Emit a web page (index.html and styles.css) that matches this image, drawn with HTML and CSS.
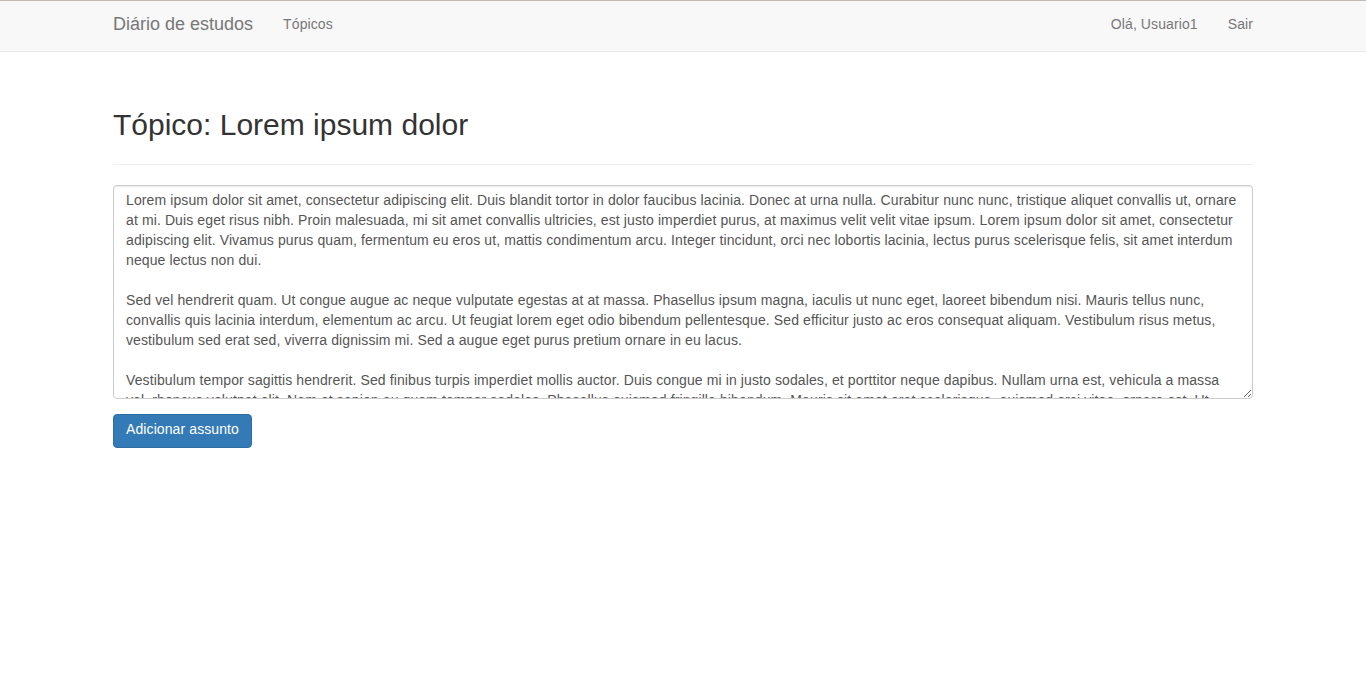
FILE: index.html
```html
<!DOCTYPE html>
<html lang="pt">
<head>
<meta charset="utf-8">
<title>Diário de estudos</title>
<link rel="stylesheet" href="styles.css">
</head>
<body>
<nav class="navbar">
  <div class="container navbar-inner">
    <div class="nav-left">
      <a class="brand" href="#">Diário de estudos</a>
      <a class="nav-link" href="#">Tópicos</a>
    </div>
    <div class="nav-right">
      <a class="nav-link" href="#">Olá, Usuario1</a>
      <a class="nav-link" href="#">Sair</a>
    </div>
  </div>
</nav>
<main class="container">
  <div class="page-header">
    <h2 class="title">Tópico: Lorem ipsum dolor</h2>
  </div>
  <form class="form">
    <textarea class="form-control" rows="10">Lorem ipsum dolor sit amet, consectetur adipiscing elit. Duis blandit tortor in dolor faucibus lacinia. Donec at urna nulla. Curabitur nunc nunc, tristique aliquet convallis ut, ornare at mi. Duis eget risus nibh. Proin malesuada, mi sit amet convallis ultricies, est justo imperdiet purus, at maximus velit velit vitae ipsum. Lorem ipsum dolor sit amet, consectetur adipiscing elit. Vivamus purus quam, fermentum eu eros ut, mattis condimentum arcu. Integer tincidunt, orci nec lobortis lacinia, lectus purus scelerisque felis, sit amet interdum neque lectus non dui.

Sed vel hendrerit quam. Ut congue augue ac neque vulputate egestas at at massa. Phasellus ipsum magna, iaculis ut nunc eget, laoreet bibendum nisi. Mauris tellus nunc, convallis quis lacinia interdum, elementum ac arcu. Ut feugiat lorem eget odio bibendum pellentesque. Sed efficitur justo ac eros consequat aliquam. Vestibulum risus metus, vestibulum sed erat sed, viverra dignissim mi. Sed a augue eget purus pretium ornare in eu lacus.

Vestibulum tempor sagittis hendrerit. Sed finibus turpis imperdiet mollis auctor. Duis congue mi in justo sodales, et porttitor neque dapibus. Nullam urna est, vehicula a massa vel, rhoncus volutpat elit. Nam et sapien eu quam tempor sodales. Phasellus euismod fringilla bibendum. Mauris sit amet erat scelerisque, euismod orci vitae, ornare est. Ut tincidunt magna sed nisl viverra, vel consequat justo dictum.</textarea>
    <button type="button" class="btn">Adicionar assunto</button>
  </form>
</main>
</body>
</html>
```
FILE: styles.css
```css
* { box-sizing: border-box; }
html, body { margin: 0; padding: 0; }
body {
  font-family: "Liberation Sans", Arial, sans-serif;
  font-size: 14px;
  line-height: 20px;
  color: #333;
  background: #fff;
}
.container {
  width: 1170px;
  margin: 0 auto;
  padding: 0 15px;
}
.navbar {
  background: #f8f8f8;
  border-top: 1px solid #c2bab2;
  border-bottom: 1px solid #e7e7e7;
  height: 52px;
}
.navbar-inner {
  display: flex;
  justify-content: space-between;
  height: 50px;
}
.nav-left, .nav-right { display: flex; align-items: stretch; }
.nav-left { margin-left: -15px; }
.nav-right { margin-right: -15px; }
.brand {
  font-size: 18px;
  line-height: 20px;
  padding: 13px 15px 17px;
  color: #777;
  text-decoration: none;
}
.nav-link {
  padding: 13px 15px 17px;
  color: #777;
  text-decoration: none;
  line-height: 20px;
  letter-spacing: 0.1px;
}
.page-header {
  margin: 56px 0 20px;
  padding-bottom: 23px;
  border-bottom: 1px solid #eee;
}
.title {
  margin: 0;
  font-size: 30px;
  font-weight: 500;
  line-height: 33px;
  color: #333;
}
.form { display: flex; flex-direction: column; align-items: flex-start; }
.form-control {
  display: block;
  width: 100%;
  height: 214px;
  padding: 4px 12px 8px;
  font-family: "Liberation Sans", Arial, sans-serif;
  font-size: 14px;
  line-height: 20px;
  letter-spacing: 0.11px;
  color: #555;
  background: #fff;
  border: 1px solid #ccc;
  border-radius: 4px;
  box-shadow: inset 0 1px 1px rgba(0,0,0,.075);
  margin: 0 0 15px;
  resize: vertical;
  scrollbar-width: none;
}
.form-control::-webkit-scrollbar { display: none; }
.btn {
  font-family: "Liberation Sans", Arial, sans-serif;
  font-size: 14px;
  line-height: 20px;
  letter-spacing: 0.1px;
  padding: 4px 12px 8px;
  color: #fff;
  background: #337ab7;
  border: 1px solid #2e6da4;
  border-radius: 4px;
  cursor: pointer;
}
```
